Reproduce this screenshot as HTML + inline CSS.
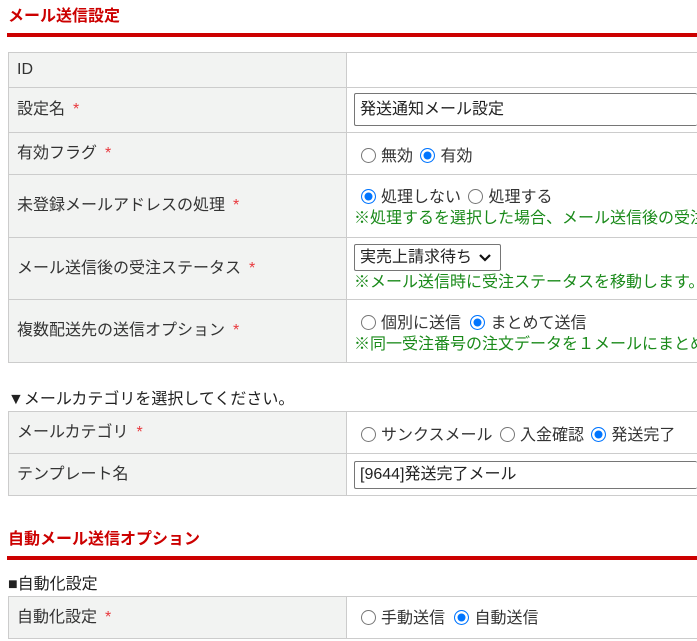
<!DOCTYPE html>
<html><head><meta charset="utf-8"><style>
*{box-sizing:border-box;margin:0;padding:0}
html,body{width:697px;height:641px;overflow:hidden}
body{background:#fff;font-family:"Liberation Sans","Noto Sans CJK JP",sans-serif;font-size:16px;line-height:20px;color:#333;position:relative}
.a{position:absolute;white-space:nowrap;max-width:343px;overflow:hidden;margin-top:2px}
h2{position:absolute;left:8px;font-size:16px;line-height:20px;color:#c00;font-weight:bold;margin-top:2px}
.line{position:absolute;left:7px;width:690px;height:4px;background:#c00}
.lab{position:absolute;left:8px;width:339px;background:#f2f3f2;border:1px solid #ccc;padding-left:8px;display:flex;align-items:center;white-space:nowrap}
.val{position:absolute;left:346px;width:351px;border:1px solid #ccc;border-right:none;background:#fff}
.req{color:#e8383d;margin-left:8px}
.g{color:#1a8a1a}
.r{display:inline-block;width:15px;height:15px;border:1px solid #767676;border-radius:50%;vertical-align:-2px;margin-right:5px;background:#fff}
.r.on{border:1px solid #0075ff;background:#0075ff;box-shadow:inset 0 0 0 2.5px #fff}
.inp{position:absolute;border:1px solid #767676;border-radius:2px;background:#fff;padding-left:5px;display:flex;align-items:center;color:#222;white-space:nowrap;overflow:hidden}
</style></head><body>
<h2 style="top:5px">メール送信設定</h2>
<div class="line" style="top:33px"></div>

<div class="lab" style="top:52px;height:36px">ID</div><div class="val" style="top:52px;height:36px"></div>
<div class="lab" style="top:87px;height:46px">設定名<span class="req">*</span></div><div class="val" style="top:87px;height:46px"></div>
<div class="inp" style="left:354px;top:93px;width:343px;height:33px;border-right:none">発送通知メール設定</div>
<div class="lab" style="top:132px;height:43px">有効フラグ<span class="req">*</span></div><div class="val" style="top:132px;height:43px"></div>
<div class="a" style="left:361px;top:145px"><span class="r"></span>無効 <span class="r on" style="margin-left:3px"></span>有効</div>
<div class="lab" style="top:174px;height:64px">未登録メールアドレスの処理<span class="req">*</span></div><div class="val" style="top:174px;height:64px"></div>
<div class="a" style="left:361px;top:186px"><span class="r on"></span>処理しない <span class="r" style="margin-left:3px"></span>処理する</div>
<div class="a g" style="left:354px;top:207px">※処理するを選択した場合、メール送信後の受注ステータスを</div>
<div class="lab" style="top:237px;height:63px">メール送信後の受注ステータス<span class="req">*</span></div><div class="val" style="top:237px;height:63px"></div>
<div class="inp" style="left:354px;top:244px;width:147px;height:27px">実売上請求待ち <svg width="14" height="10" style="margin-left:6px" viewBox="0 0 14 10"><path d="M2 2l5 5 5-5" stroke="#111" stroke-width="2.2" fill="none"/></svg></div>
<div class="a g" style="left:354px;top:271px">※メール送信時に受注ステータスを移動します。</div>
<div class="lab" style="top:299px;height:64px">複数配送先の送信オプション<span class="req">*</span></div><div class="val" style="top:299px;height:64px"></div>
<div class="a" style="left:361px;top:312px"><span class="r"></span>個別に送信 <span class="r on" style="margin-left:5px"></span>まとめて送信</div>
<div class="a g" style="left:354px;top:333px">※同一受注番号の注文データを１メールにまとめて送信</div>

<div class="a" style="left:8px;top:388px;color:#222">▼メールカテゴリを選択してください。</div>
<div class="lab" style="top:411px;height:43px">メールカテゴリ<span class="req">*</span></div><div class="val" style="top:411px;height:43px"></div>
<div class="a" style="left:361px;top:424px"><span class="r"></span>サンクスメール <span class="r" style="margin-left:3px"></span>入金確認 <span class="r on" style="margin-left:3px"></span>発送完了</div>
<div class="lab" style="top:453px;height:43px">テンプレート名</div><div class="val" style="top:453px;height:43px"></div>
<div class="inp" style="left:354px;top:461px;width:343px;height:28px;border-right:none">[9644]発送完了メール</div>

<h2 style="top:528px">自動メール送信オプション</h2>
<div class="line" style="top:556px"></div>
<div class="a" style="left:8px;top:573px;color:#222">■自動化設定</div>
<div class="lab" style="top:596px;height:43px">自動化設定<span class="req">*</span></div><div class="val" style="top:596px;height:43px"></div>
<div class="a" style="left:361px;top:607px"><span class="r"></span>手動送信 <span class="r on" style="margin-left:5px"></span>自動送信</div>
</body></html>
